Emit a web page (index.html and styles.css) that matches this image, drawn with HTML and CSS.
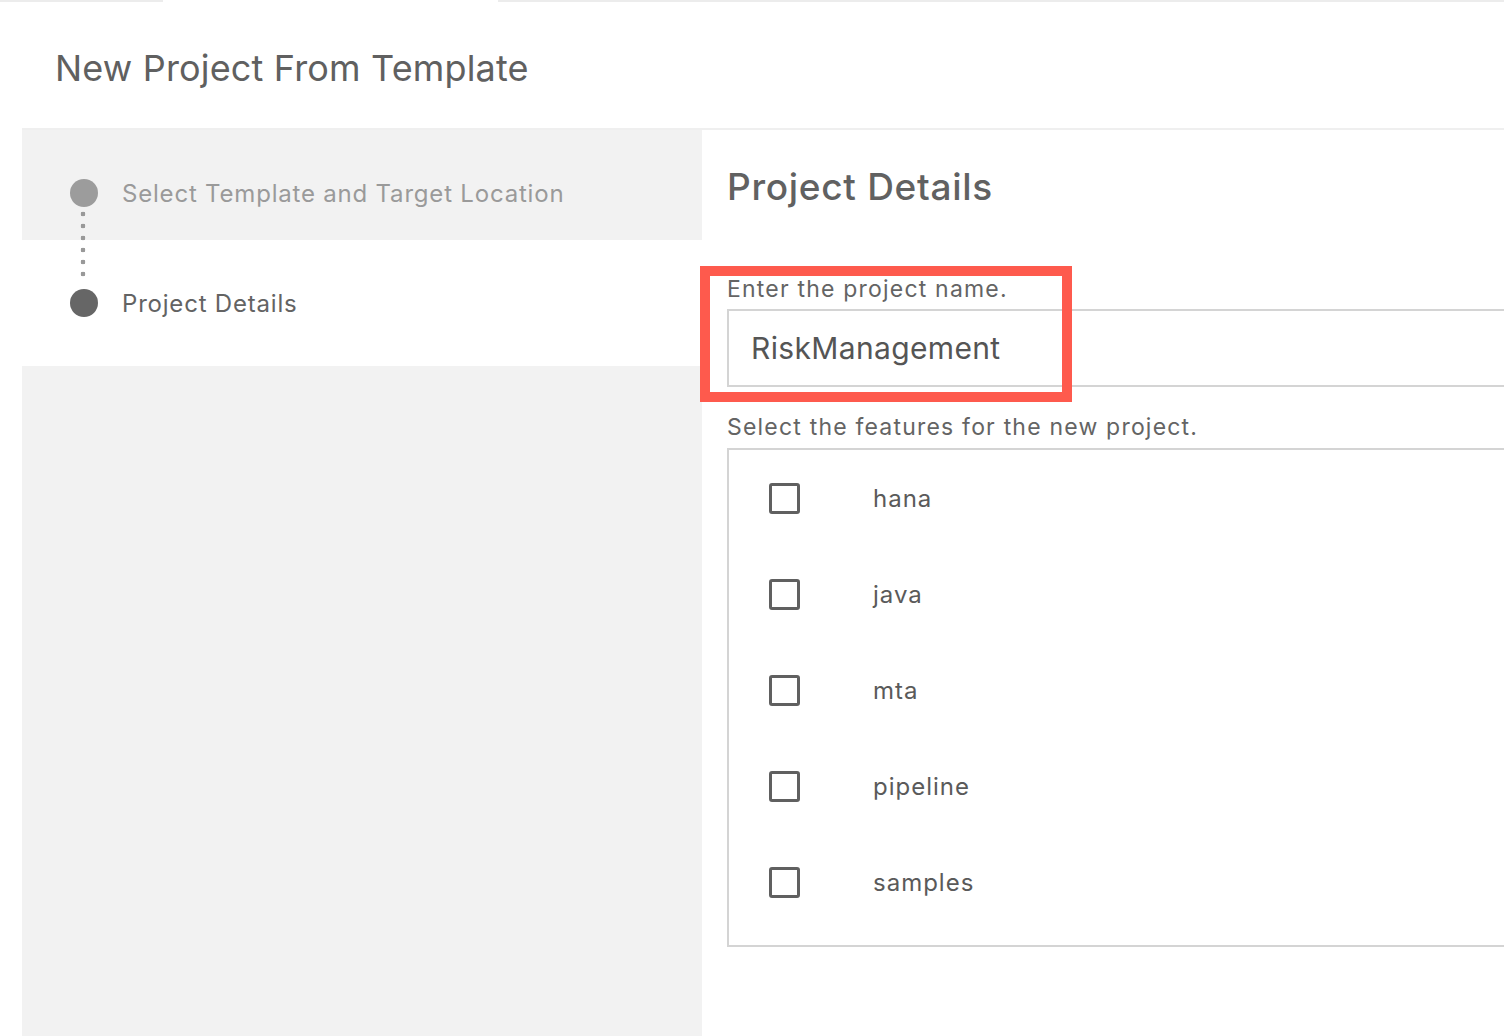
FILE: index.html
```html
<!DOCTYPE html>
<html lang="en">
<head>
<meta charset="utf-8">
<title>New Project From Template</title>
<link rel="stylesheet" href="styles.css">
</head>
<body>
<div class="tabline">
  <div class="tab-seg tab-seg-a"></div>
  <div class="tab-seg tab-seg-gap"></div>
  <div class="tab-seg tab-seg-b"></div>
</div>
<header class="page-header">
  <h1 class="page-title">New Project From Template</h1>
</header>
<main class="wizard">
  <nav class="steps">
    <div class="step step-done">
      <span class="step-dot"></span>
      <span class="step-label">Select Template and Target Location</span>
      <span class="step-connector"></span>
    </div>
    <div class="step step-current">
      <span class="step-dot"></span>
      <span class="step-label">Project Details</span>
    </div>
    <div class="steps-fill"></div>
  </nav>
  <section class="content">
    <h2 class="content-title">Project Details</h2>
    <div class="field field-name">
      <label class="field-label" for="pname">Enter the project name.</label>
      <div class="text-input" id="pname">RiskManagement</div>
      <span class="highlight"></span>
    </div>
    <div class="field">
      <div class="field-label field-label-features">Select the features for the new project.</div>
      <ul class="feature-list">
        <li class="feature"><span class="checkbox"></span><span class="feature-name">hana</span></li>
        <li class="feature"><span class="checkbox"></span><span class="feature-name">java</span></li>
        <li class="feature"><span class="checkbox"></span><span class="feature-name">mta</span></li>
        <li class="feature"><span class="checkbox"></span><span class="feature-name">pipeline</span></li>
        <li class="feature"><span class="checkbox"></span><span class="feature-name">samples</span></li>
      </ul>
    </div>
  </section>
</main>
</body>
</html>
```
FILE: styles.css
```css
* { box-sizing: border-box; }
html, body { margin: 0; padding: 0; background: #fff; }
body {
  width: 1504px;
  height: 1036px;
  overflow: hidden;
  font-family: Inter, "Noto Sans", "Liberation Sans", sans-serif;
  color: #666;
  display: flex;
  flex-direction: column;
}
.tabline { display: flex; height: 2px; flex: none; }
.tab-seg-a { width: 163px; background: #ececec; }
.tab-seg-gap { width: 335px; background: #fff; }
.tab-seg-b { flex: 1; background: #ececec; }

.page-header {
  height: 126px;
  flex: none;
  display: flex;
  align-items: center;
  padding-left: 55px;
  padding-top: 6px;
}
.page-title {
  margin: 0;
  font-size: 36px;
  line-height: 44px;
  font-weight: 400;
  color: #606060;
  letter-spacing: 0.17px;
}

.wizard {
  flex: 1;
  display: flex;
  margin-left: 22px;
  border-top: 2px solid #efefef;
  min-height: 0;
}
.steps {
  width: 680px;
  flex: none;
  display: flex;
  flex-direction: column;
  background: #f2f2f2;
}
.step {
  position: relative;
  display: flex;
  align-items: center;
  padding-left: 48px;
}
.step-done { height: 110px; padding-top: 16px; background: #f2f2f2; }
.step-current { height: 126px; background: #fff; }
.steps-fill { flex: 1; background: #f2f2f2; }
.step-dot {
  width: 28px;
  height: 28px;
  border-radius: 50%;
  flex: none;
}
.step-done .step-dot { background: #9c9c9c; }
.step-current .step-dot { background: #666; }
.step-label {
  margin-left: 24px;
  font-size: 24px;
  letter-spacing: 0.8px;
}
.step-done .step-label { color: #9a9a9a; }
.step-current .step-label { color: #636363; }
.step-connector {
  position: absolute;
  z-index: 1;
  left: 58px;
  top: 78px;
  width: 6px;
  height: 70px;
  background-image: radial-gradient(circle, #999 2.1px, transparent 2.6px);
  background-size: 6px 12px;
  background-repeat: repeat-y;
  background-position: 0 0;
}

.content {
  flex: 1;
  padding-left: 25px;
  min-width: 0;
}
.content-title {
  margin: 0;
  font-size: 37px;
  line-height: 44px;
  font-weight: 500;
  color: #616161;
  height: 140px;
  padding-top: 35px;
  letter-spacing: 0.7px;
}
.field { position: relative; }
.field-label {
  display: block;
  font-size: 23px;
  letter-spacing: 1.2px;
  color: #646464;
  height: 39px;
  padding-top: 6px;
  line-height: 26px;
}
.field-label-features { height: 40px; }
.text-input {
  height: 78px;
  border: 2px solid #d4d4d4;
  border-right: none;
  display: flex;
  align-items: center;
  padding-left: 22px;
  font-size: 30px;
  letter-spacing: 0.35px;
  color: #555;
  margin-bottom: 21px;
}
.highlight {
  position: absolute;
  left: -27px;
  top: -4px;
  width: 372px;
  height: 136px;
  border: 10px solid #fe5a4d;
}
.feature-list {
  list-style: none;
  margin: 0;
  padding: 0 0 15px 0;
  border: 2px solid #d4d4d4;
  border-right: none;
}
.feature {
  height: 96px;
  display: flex;
  align-items: center;
  padding-left: 40px;
}
.checkbox {
  width: 31px;
  height: 31px;
  border: 3px solid #606060;
  border-radius: 3px;
  flex: none;
}
.feature-name {
  margin-left: 73px;
  font-size: 24px;
  letter-spacing: 1px;
  color: #5a5a5a;
}
```
